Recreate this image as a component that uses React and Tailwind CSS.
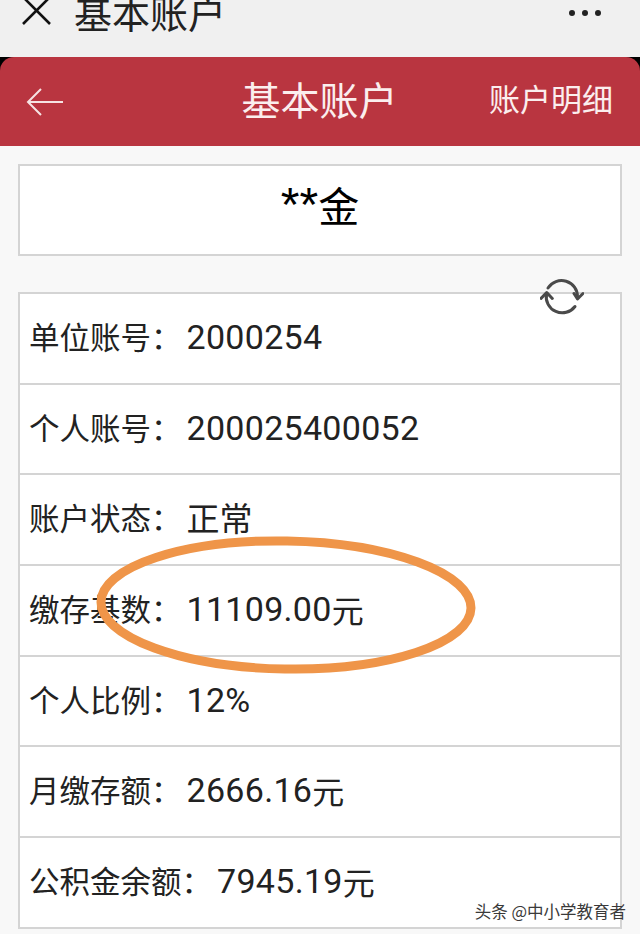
import React from 'react';

const font = { fontFamily: '"Noto Sans CJK SC", "Noto Sans", sans-serif' };
const digits = { fontFamily: 'Roboto, "Noto Sans CJK SC", sans-serif' };

const rows = [
  { label: '单位账号：', value: '2000254' },
  { label: '个人账号：', value: '200025400052' },
  { label: '账户状态：', text: '正常' },
  { label: '缴存基数：', value: '11109.00', unit: '元' },
  { label: '个人比例：', value: '12%' },
  { label: '月缴存额：', value: '2666.16', unit: '元' },
  { label: '公积金余额：', value: '7945.19', unit: '元' },
];

const RefreshIcon = () => (
  <svg width="44" height="44" viewBox="0 0 44 44" fill="none" stroke="#4a4a4a" strokeWidth="3" strokeLinecap="round" strokeLinejoin="round">
    <path d="M8 15A16 16 0 0 1 37.500 24" />
    <path d="M34 20.500L37.500 26L43 20.500" />
    <path d="M35 33.500A16 16 0 0 1 6.500 21" />
    <path d="M1 25.500L6.700 19.500L12.300 25.500" />
  </svg>
);

const App = () => {
  return (
    <div className="relative w-[640px] h-[934px] overflow-hidden bg-[#f8f8f8]" style={font}>
      {/* browser bar */}
      <div className="h-[57px] bg-[#f0f0f0] flex items-start justify-between pl-[22px] pr-[39px] overflow-hidden">
        <div className="flex items-start">
          <svg width="30" height="26" viewBox="0 0 30 26" className="mt-[-1px]" fill="none" stroke="#111" strokeWidth="2.600">
            <path d="M1 -2L28 25M28 -2L1 25" />
          </svg>
          <span className="ml-[22px] mt-[-13px] text-[38px] leading-[50px] text-[#222]">基本账户</span>
        </div>
        <div className="flex gap-[7px] mt-[10px]">
          <span className="w-[6px] h-[6px] rounded-full bg-[#222]"></span>
          <span className="w-[6px] h-[6px] rounded-full bg-[#222]"></span>
          <span className="w-[6px] h-[6px] rounded-full bg-[#222]"></span>
        </div>
      </div>

      {/* red header */}
      <div className="bg-black">
        <div className="h-[89px] bg-[#b93540] rounded-t-[14px] flex items-center justify-between pl-[26px] pr-[27px] text-white">
          <svg width="38" height="30" viewBox="0 0 38 30" className="mt-[1px]" fill="none" stroke="#f6e3e3" strokeWidth="2">
            <path d="M37 15H2M15 2L2 15L15 28" />
          </svg>
          <span className="ml-[86px] mt-[-8px] text-[39px] leading-[50px] text-[#fbeeee]">基本账户</span>
          <span className="mt-[-7px] text-[31px] leading-[44px] text-[#fbeeee]">账户明细</span>
        </div>
      </div>

      <div className="px-[18px] pt-[18px]">
        {/* name */}
        <div className="h-[92px] bg-white border-2 border-[#d4d4d4] flex items-center justify-center pb-[10px] text-[41px] text-black">
          <span className="text-[48px] leading-[50px]" style={{ fontFamily: '"Liberation Sans", sans-serif' }}>**</span>
          <span>金</span>
        </div>

        {/* account info */}
        <div className="mt-[36px] bg-white border-2 border-b-0 border-[#d4d4d4]">
          {rows.map((row) => (
            <div key={row.label} className="h-[90.700px] border-b-2 border-[#d4d4d4] flex items-center pl-[9px] pb-[3px] text-[#222]">
              <span className="text-[30.500px] whitespace-nowrap">{row.label}</span>
              <span className="ml-[5px] flex items-center whitespace-nowrap">
                {row.text && <span className="text-[33px]">{row.text}</span>}
                {row.value && <span className="text-[34px] leading-[46px] tracking-[0.3px]" style={digits}>{row.value}</span>}
                {row.unit && <span className="text-[32px]">{row.unit}</span>}
              </span>
            </div>
          ))}
        </div>
      </div>

      {/* refresh button */}
      <div className="absolute left-[540px] top-[273px]">
        <RefreshIcon />
      </div>

      {/* hand-drawn oval */}
      <svg className="absolute left-0 top-0 pointer-events-none" width="640" height="934" viewBox="0 0 640 934" fill="none">
        <ellipse cx="286" cy="605" rx="185" ry="64" stroke="#ef9549" strokeWidth="9" transform="rotate(1 286 605)" />
      </svg>

      {/* watermark */}
      <div className="absolute right-[14px] top-[899px] text-[16.500px] leading-[24px] text-[#3a3a3a] whitespace-nowrap">头条 @中小学教育者</div>
    </div>
  );
};

export default App;
